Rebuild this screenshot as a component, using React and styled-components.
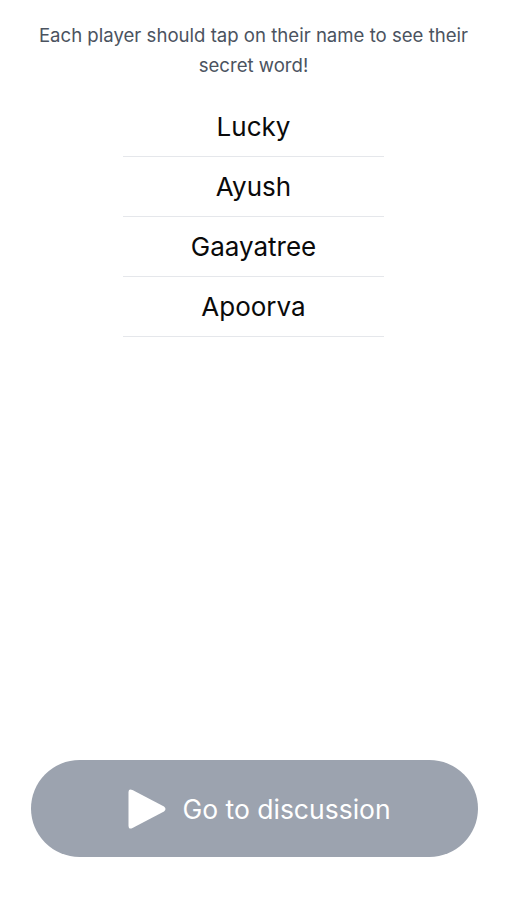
import React from "react";
import styled, { createGlobalStyle } from "styled-components";

const GlobalStyle = createGlobalStyle`
html, body {
  margin: 0;
  padding: 0;
  background: #ffffff;
  font-family: Inter, "Liberation Sans", sans-serif;
}
`

const Page = styled.div`
display: flex;
flex-direction: column;
align-items: center;
height: 900px;
box-sizing: border-box;
padding: 20px 0 43px;
`

const Hint = styled.p`
margin: 0;
width: 470px;
text-align: center;
font-size: 18.6px;
line-height: 30px;
color: #4b5360;
`

const List = styled.ul`
list-style: none;
margin: 17px 0 0;
padding: 0;
width: 261px;
`

const Row = styled.li`
display: flex;
align-items: center;
justify-content: center;
height: 59px;
border-bottom: 1px solid #e5e7eb;
font-size: 26px;
color: #0a0a0a;
cursor: pointer;
`

const Button = styled.button`
margin-top: auto;
display: flex;
align-items: center;
justify-content: center;
gap: 15px;
width: 447px;
height: 97px;
margin-left: 2px;
padding: 0 0 0 9px;
border: none;
border-radius: 49px;
background: #9ca3af;
color: #ffffff;
font-family: inherit;
font-size: 26.5px;
cursor: pointer;
`

const players = ["Lucky", "Ayush", "Gaayatree", "Apoorva"];

const PlayIcon = () => (
    <svg width="40" height="42" viewBox="0 0 40 42">
        <path d="M1.5 4.5 Q1.5 0 5.5 2 L37 18.5 Q40 21 37 23.5 L5.5 40 Q1.5 42 1.5 37.5 Z" fill="#ffffff" />
    </svg>
)

const App = () => {
    return (
        <Page>
            <GlobalStyle />
            <Hint>Each player should tap on their name to see their secret word!</Hint>
            <List>
                {players.map((name) => (
                    <Row key={name}>{name}</Row>
                ))}
            </List>
            <Button>
                <PlayIcon />
                Go to discussion
            </Button>
        </Page>
    )
}

export default App;
